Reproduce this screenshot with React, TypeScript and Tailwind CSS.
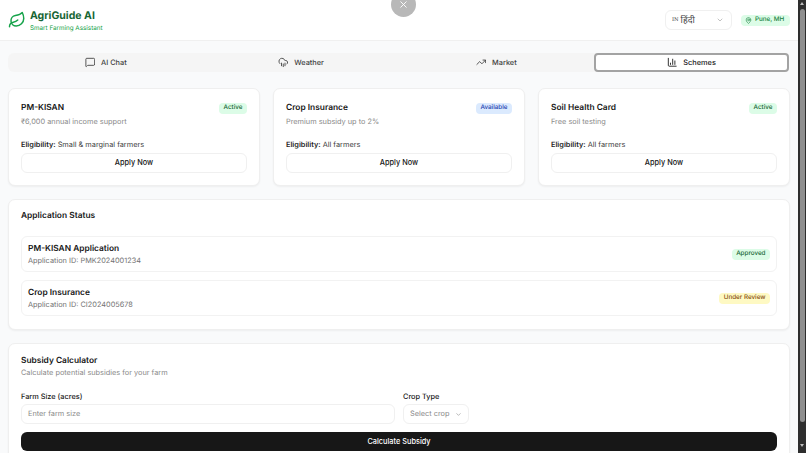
import { BarChart3, ChevronDown, CloudRain, Leaf, MapPin, MessageSquare, TrendingUp, X } from "lucide-react";

const tabs = [
  { label: "AI Chat", icon: MessageSquare },
  { label: "Weather", icon: CloudRain },
  { label: "Market", icon: TrendingUp },
  { label: "Schemes", icon: BarChart3, active: true },
];

const schemes = [
  { title: "PM-KISAN", desc: "₹6,000 annual income support", who: "Small & marginal farmers", badge: "Active", tone: "bg-[#dcfce7] text-[#166534]" },
  { title: "Crop Insurance", desc: "Premium subsidy up to 2%", who: "All farmers", badge: "Available", tone: "bg-[#dbeafe] text-[#1e40af]" },
  { title: "Soil Health Card", desc: "Free soil testing", who: "All farmers", badge: "Active", tone: "bg-[#dcfce7] text-[#166534]" },
];

const applications = [
  { title: "PM-KISAN Application", id: "PMK2024001234", badge: "Approved", tone: "bg-[#dcfce7] text-[#166534]" },
  { title: "Crop Insurance", id: "CI2024005678", badge: "Under Review", tone: "bg-[#fef9c3] text-[#854d0e]" },
];

function Badge({ text, tone }: { text: string; tone: string }) {
  return <span className={`flex h-[11px] items-center rounded-[4px] px-[4.5px] text-[6.3px] font-medium ${tone}`}>{text}</span>;
}

export default function App() {
  return (
    <div className="relative flex h-screen overflow-hidden bg-[#f9fafb] font-['Inter',sans-serif] text-[#171717] [text-rendering:geometricPrecision]">
      <div className="flex w-[798px] flex-col">
        <header className="flex h-[41px] shrink-0 items-center justify-between border-b border-[#f0f0f0] bg-white pr-[8px] pl-[8px]">
          <div className="flex items-center gap-[4px]">
            <Leaf className="h-[18px] w-[18px] text-[#16a34a]" strokeWidth={2} />
            <div className="pt-[2px]">
              <div className="text-[10.5px] leading-[14px] font-bold text-[#166534]">AgriGuide AI</div>
              <div className="text-[6.3px] leading-[10px] text-[#16a34a]">Smart Farming Assistant</div>
            </div>
          </div>
          <div className="flex items-center gap-[9px]">
            <div className="flex h-[20px] w-[67px] items-center justify-between rounded-md border border-[#f0f0f0] pr-[7px] pl-[6px]">
              <span className="flex items-center gap-[2px] text-[#404040]">
                <span className="font-['DejaVu_Serif',serif] text-[5.2px] leading-[12px]">IN</span>
                <span className="font-['Noto_Sans','DejaVu_Sans',sans-serif] text-[9px] leading-[12px]">हिंदी</span>
              </span>
              <ChevronDown className="h-[8px] w-[8px] text-[#a3a3a3]" />
            </div>
            <div className="flex h-[11px] w-[49px] items-center gap-[3px] rounded-[4px] bg-[#dcfce7] pl-[4px] text-[6.3px] font-medium text-[#15803d]">
              <MapPin className="h-[7px] w-[7px]" />
              Pune, MH
            </div>
          </div>
        </header>

        <main className="flex flex-col gap-[13px] px-[8px] pt-[12px]">
          <nav className="mr-[1px] mb-[3px] grid h-[19px] grid-cols-4 rounded-md bg-[#f5f5f5] text-[7.35px] font-medium text-[#404040]">
            {tabs.map((t) => (
              <div
                key={t.label}
                className={`flex items-center justify-center gap-[6px] rounded-[4px] ${t.active ? "border-2 border-[#a3a3a3] bg-white text-[#171717]" : ""}`}
              >
                <t.icon className="h-[10.5px] w-[10.5px]" />
                {t.label}
              </div>
            ))}
          </nav>

          <section className="grid grid-cols-3 gap-[13px]">
            {schemes.map((s) => (
              <div key={s.title} className="rounded-[7px] border border-[#efefef] bg-white px-[12px] pt-[13px] pb-[12px] shadow-[0_1px_2px_rgba(0,0,0,0.05)]">
                <div className="flex items-center justify-between">
                  <h3 className="text-[8.4px] leading-[12px] font-semibold">{s.title}</h3>
                  <Badge text={s.badge} tone={s.tone} />
                </div>
                <p className="mt-[2px] text-[7.35px] leading-[12px] text-[#8a8a8a]">{s.desc}</p>
                <p className="mt-[11px] text-[7.35px] leading-[12px] text-[#404040]">
                  <span className="font-semibold text-[#262626]">Eligibility:</span> {s.who}
                </p>
                <button className="mt-[2px] block h-[20px] w-full rounded-md border border-[#f0f0f0] bg-white text-[7.35px] font-medium">Apply Now</button>
              </div>
            ))}
          </section>

          <section className="rounded-[7px] border border-[#efefef] bg-white px-[12px] pt-[10px] pb-[13px] shadow-[0_1px_2px_rgba(0,0,0,0.05)]">
            <h3 className="mb-[14px] text-[8.4px] leading-[12px] font-semibold">Application Status</h3>
            <div className="flex flex-col gap-[8px]">
              {applications.map((a) => (
                <div key={a.title} className="flex h-[36px] items-center justify-between rounded-md border border-[#f2f2f2] bg-white px-[6px]">
                  <div>
                    <div className="text-[8.4px] leading-[12px] font-semibold">{a.title}</div>
                    <div className="text-[7.35px] leading-[11px] text-[#737373]">Application ID: {a.id}</div>
                  </div>
                  <Badge text={a.badge} tone={a.tone} />
                </div>
              ))}
            </div>
          </section>

          <section className="rounded-[7px] border border-[#efefef] bg-white px-[12px] pt-[11px] pb-[12px] shadow-[0_1px_2px_rgba(0,0,0,0.05)]">
            <h3 className="text-[8.4px] leading-[12px] font-semibold">Subsidy Calculator</h3>
            <p className="text-[7.35px] leading-[11px] text-[#8a8a8a]">Calculate potential subsidies for your farm</p>
            <div className="mt-[13px] grid grid-cols-2 gap-[8px]">
              <div>
                <div className="mb-[1px] text-[7.35px] leading-[12px] font-medium">Farm Size (acres)</div>
                <div className="flex h-[20px] items-center rounded-md border border-[#f0f0f0] px-[6px] text-[7.35px] text-[#8a8a8a]">Enter farm size</div>
              </div>
              <div>
                <div className="mb-[1px] text-[7.35px] leading-[12px] font-medium">Crop Type</div>
                <div className="flex h-[20px] w-[66px] items-center justify-between rounded-md border border-[#f0f0f0] px-[6px] text-[7.35px] text-[#8a8a8a]">
                  Select crop
                  <ChevronDown className="h-[7px] w-[7px]" />
                </div>
              </div>
            </div>
            <button className="mt-[8px] block h-[19px] w-full rounded-md bg-[#171717] text-[7.35px] font-medium text-white">Calculate Subsidy</button>
          </section>
        </main>
      </div>

      <div className="absolute top-[-8px] left-[391px] flex h-[25px] w-[25px] items-center justify-center rounded-full bg-[#b8b8b8] text-white">
        <X className="h-[11px] w-[11px]" />
      </div>

      <div className="flex w-[8px] flex-col items-center bg-[#2e2e2e] pt-[2px]">
        <div className="h-0 w-0 border-x-[2.5px] border-b-[3px] border-x-transparent border-b-[#bdbdbd]" />
        <div className="mt-[4px] h-[413px] w-[5px] rounded-full bg-[#8f8f8f]" />
        <div className="mt-[22px] h-0 w-0 border-x-[2.5px] border-t-[3px] border-x-transparent border-t-[#bdbdbd]" />
      </div>
    </div>
  );
}
